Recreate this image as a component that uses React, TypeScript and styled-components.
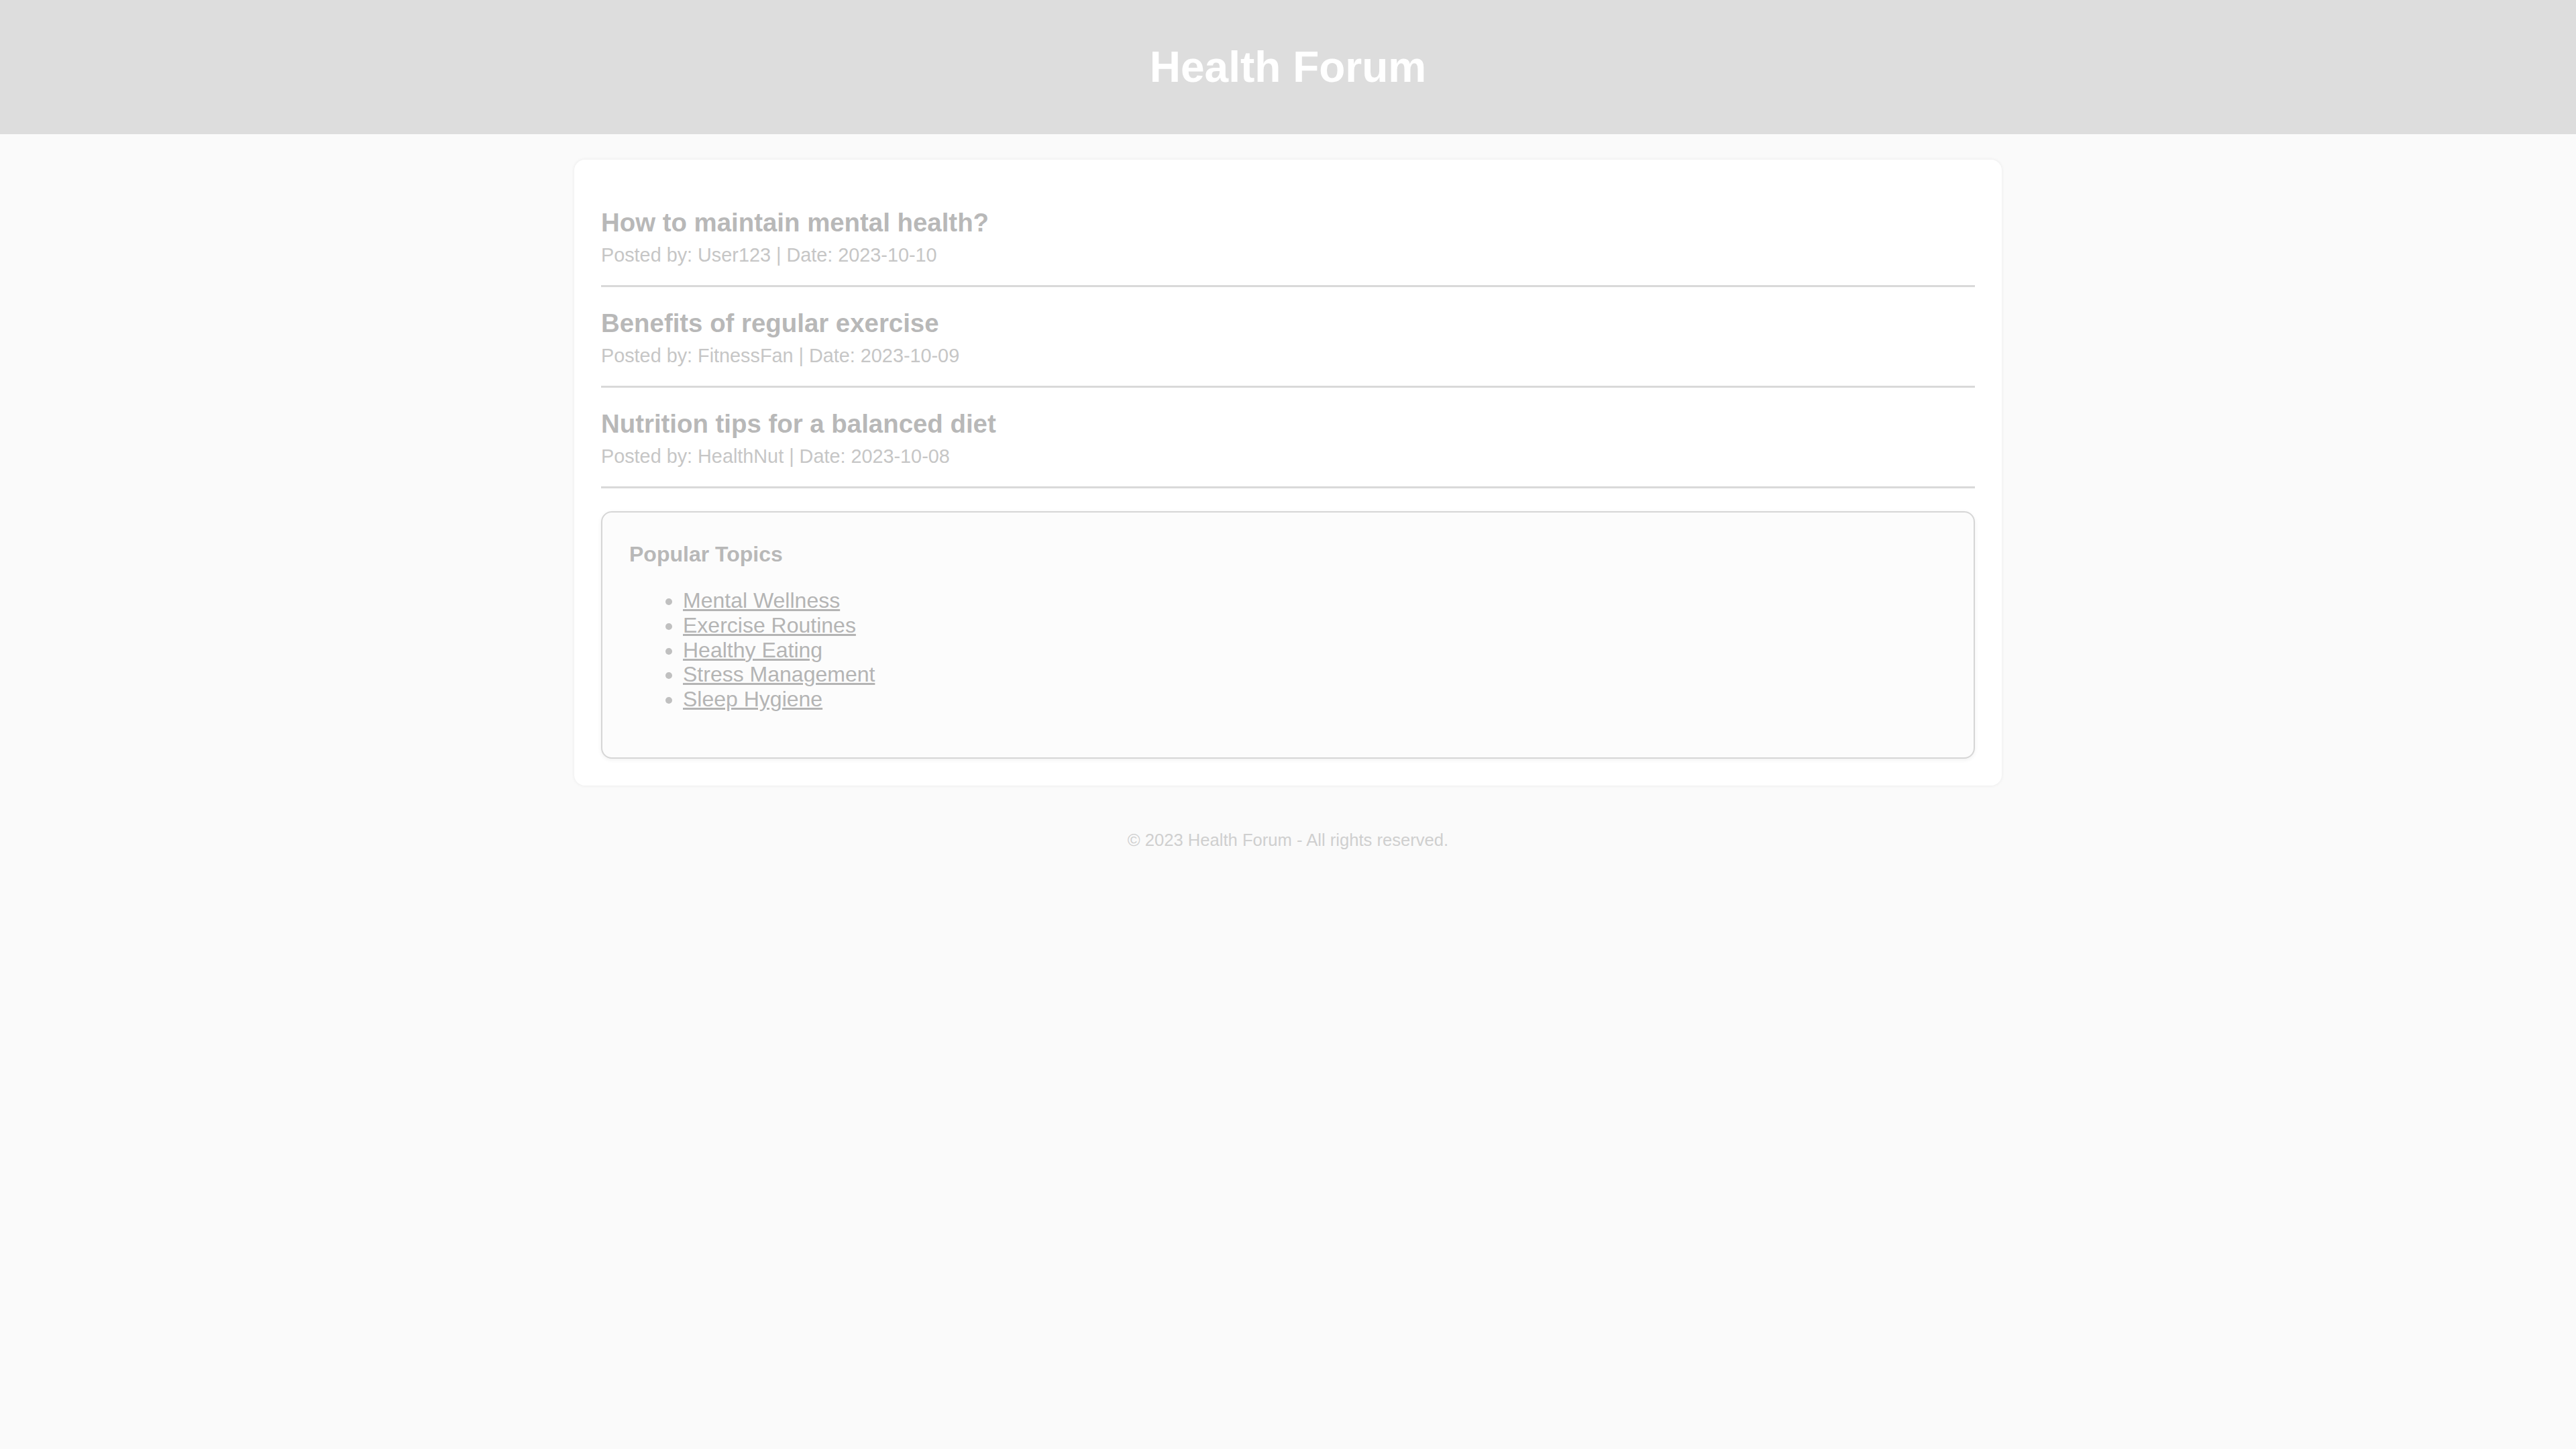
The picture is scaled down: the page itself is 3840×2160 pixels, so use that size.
import React from "react"
import styled, { createGlobalStyle } from "styled-components"

const GlobalStyle = createGlobalStyle`
  body {
    margin: 0;
    background-color: #fafafa;
    font-family: "Liberation Sans", Arial, sans-serif;
  }
`

const Header = styled.header`
  display: flex;
  justify-content: center;
  align-items: center;
  height: 200px;
  background-color: #dddddd;
`

const HeaderTitle = styled.h1`
  margin: 0;
  font-size: 64px;
  font-weight: 700;
  line-height: 74px;
  color: #ffffff;
`

const Container = styled.main`
  box-sizing: border-box;
  width: 2128px;
  margin: 38px auto 40px;
  padding: 40px;
  background-color: #ffffff;
  border-radius: 16px;
  box-shadow: 0 0 4px 1px rgba(0, 0, 0, 0.05);
`

const Post = styled.article`
  padding: 32px 0 28px;
  border-bottom: 3px solid #d9d9d9;
`

const PostTitle = styled.h2`
  margin: 0 0 10px;
  font-size: 38.4px;
  line-height: 44px;
  font-weight: 700;
  color: #b8b8b8;
`

const PostMeta = styled.p`
  margin: 0;
  font-size: 28.8px;
  line-height: 33px;
  color: #c6c6c6;
`

const Sidebar = styled.aside`
  margin-top: 34px;
  padding: 44px 40px 36px;
  background-color: #fcfcfc;
  border: 2px solid #d6d6d6;
  border-radius: 16px;
  box-shadow: 0 2px 6px rgba(0, 0, 0, 0.06);
`

const SidebarTitle = styled.h3`
  margin: 0;
  font-size: 32px;
  line-height: 37px;
  font-weight: 700;
  color: #b8b8b8;
`

const TopicList = styled.ul`
  margin: 32px 0;
  padding-left: 80px;
  color: #c0c0c0;
`

const TopicItem = styled.li`
  font-size: 32px;
  line-height: 36.8px;
`

const TopicLink = styled.a`
  color: #b4b4b4;
  text-decoration: underline;
`

const Footer = styled.footer`
  padding: 26px 20px 20px;
  text-align: center;
  font-size: 25.6px;
  line-height: 30px;
  color: #cfcfcf;
`

const posts = [
  { title: "How to maintain mental health?", author: "User123", date: "2023-10-10" },
  { title: "Benefits of regular exercise", author: "FitnessFan", date: "2023-10-09" },
  { title: "Nutrition tips for a balanced diet", author: "HealthNut", date: "2023-10-08" },
]

const topics = ["Mental Wellness", "Exercise Routines", "Healthy Eating", "Stress Management", "Sleep Hygiene"]

export default function App() {
  return (
    <>
      <GlobalStyle />
      <Header>
        <HeaderTitle>Health Forum</HeaderTitle>
      </Header>
      <Container>
        {posts.map((post) => (
          <Post key={post.title}>
            <PostTitle>{post.title}</PostTitle>
            <PostMeta>
              Posted by: {post.author} | Date: {post.date}
            </PostMeta>
          </Post>
        ))}
        <Sidebar>
          <SidebarTitle>Popular Topics</SidebarTitle>
          <TopicList>
            {topics.map((topic) => (
              <TopicItem key={topic}>
                <TopicLink href="#">{topic}</TopicLink>
              </TopicItem>
            ))}
          </TopicList>
        </Sidebar>
      </Container>
      <Footer>© 2023 Health Forum - All rights reserved.</Footer>
    </>
  )
}
